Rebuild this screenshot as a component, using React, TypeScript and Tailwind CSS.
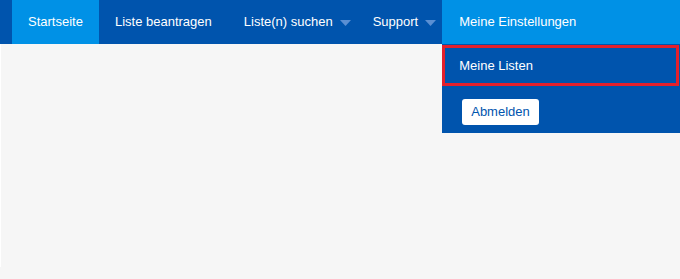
import React from 'react';

const navItems = [
  { label: 'Startseite', active: true },
  { label: 'Liste beantragen' },
  { label: 'Liste(n) suchen', caret: true },
  { label: 'Support', caret: true },
];

function Caret() {
  return (
    <svg width="11" height="6" viewBox="0 0 11 6" className="ml-[7px] mt-px">
      <path d="M0 0 L11 0 L5.5 6 Z" fill="#5a8fd3" />
    </svg>
  );
}

export default function App() {
  return (
    <div
      className="min-h-[279px] bg-[#f6f6f6] text-[13px]"
      style={{ fontFamily: '"Liberation Sans", Arial, sans-serif' }}
    >
      <nav className="flex h-[44px] bg-[#0054ad] pl-[12px] text-white">
        {navItems.map((item) => (
          <div
            key={item.label}
            className={`flex h-full items-center ${item.caret ? 'pl-4 pr-[6px]' : 'px-4'} ${
              item.active ? 'bg-[#0091e6]' : ''
            }`}
          >
            <span>{item.label}</span>
            {item.caret && <Caret />}
          </div>
        ))}
        <div className="relative flex h-full flex-1 items-center bg-[#0091e6] pl-[17px]">
          <span>Meine Einstellungen</span>
          <div className="absolute left-0 right-0 top-[44px] z-10 flex h-[89px] flex-col bg-[#0054ad] pt-px">
            <div className="mr-px flex h-[41px] items-center border-[3px] border-[#e4202c] pl-[14px]">
              Meine Listen
            </div>
            <div className="pl-[20px] pt-[13px]">
              <button className="h-[26px] rounded-[3px] bg-white px-[9px] text-[13px] text-[#0054ad]">
                Abmelden
              </button>
            </div>
          </div>
        </div>
      </nav>
      <main className="h-[223px] border-l border-white bg-[#f6f6f6]" />
    </div>
  );
}
